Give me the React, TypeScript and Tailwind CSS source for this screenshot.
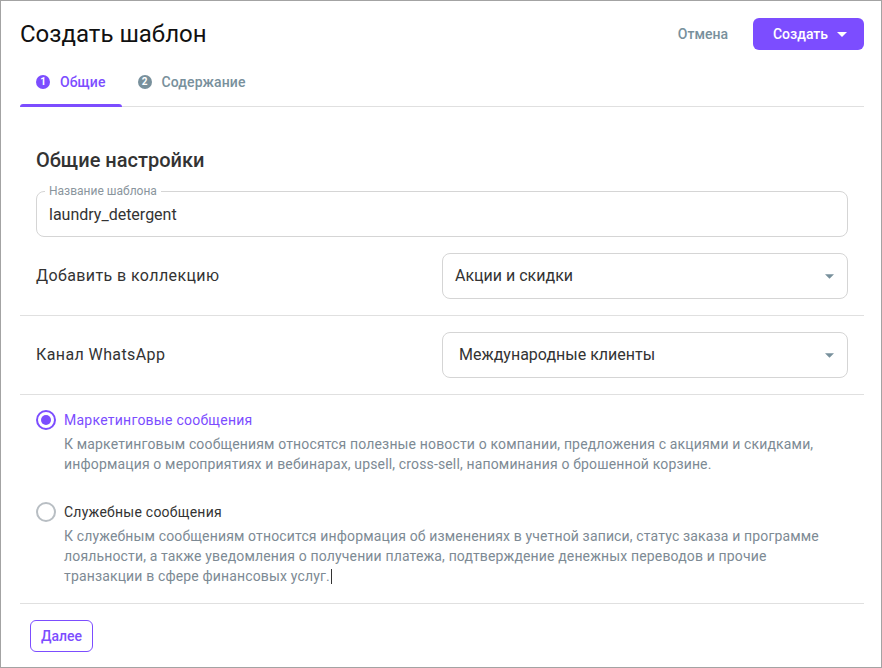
import { useState } from 'react'

const PURPLE = 'text-[#7c4dff]'

function Caret({ className }: { className?: string }) {
  return (
    <svg viewBox="0 0 10 5" className={className} aria-hidden>
      <path d="M0 0 L10 0 L5 5 Z" fill="currentColor" />
    </svg>
  )
}

function StepTab({ n, label, active }: { n: number; label: string; active?: boolean }) {
  return (
    <div className="relative flex h-[48px] items-center gap-[10px] px-4">
      <span
        className={`flex h-[14px] w-[14px] items-center justify-center rounded-full text-[10px] font-bold leading-none text-white ${
          active ? 'bg-[#7c4dff]' : 'bg-[#78909c]'
        }`}
      >
        {n}
      </span>
      <span className={`text-[14px] font-medium tracking-[0.1px] ${active ? PURPLE : 'text-[#78909c]'}`}>{label}</span>
      {active && <span className="absolute inset-x-0 -bottom-px h-[3px] rounded-t-full bg-[#7c4dff]" />}
    </div>
  )
}

function SelectBox({ value, inset = 'pl-[12px]' }: { value: string; inset?: string }) {
  return (
    <button
      type="button"
      className={`flex h-[46px] w-full items-center justify-between rounded-[8px] border border-[#d5d5d5] bg-white pr-[13px] text-left text-[16px] text-[#333] ${inset}`}
    >
      <span>{value}</span>
      <Caret className="h-[5px] w-[9px] text-[#78909c]" />
    </button>
  )
}

function Radio({
  checked,
  title,
  children,
  onSelect,
}: {
  checked: boolean
  title: string
  children: React.ReactNode
  onSelect: () => void
}) {
  return (
    <label className="flex cursor-pointer gap-[8px]" onClick={onSelect}>
      <span
        className={`flex h-[20px] w-[20px] shrink-0 items-center justify-center rounded-full border-2 ${
          checked ? 'border-[#7c4dff]' : 'border-[#b8bec3]'
        }`}
      >
        {checked && <span className="h-[10px] w-[10px] rounded-full bg-[#7c4dff]" />}
      </span>
      <span className="flex flex-col">
        <span className={`text-[14px] leading-[20px] tracking-[0.25px] ${checked ? PURPLE : 'text-[#333]'}`}>
          {title}
        </span>
        <span className="mt-[4px] text-[14px] leading-[20px] tracking-[0.15px] text-[#7d8a94]">{children}</span>
      </span>
    </label>
  )
}

export default function App() {
  const [kind, setKind] = useState<'marketing' | 'service'>('marketing')

  return (
    <div className="flex h-[668px] w-[882px] flex-col border border-[#a3a3a3] bg-white font-['Roboto',sans-serif] text-[#333]">
      {/* header */}
      <div className="flex items-center justify-between pl-[19px] pr-[17px] pt-[17px]">
        <h1 className="text-[24px] leading-[32px] text-[#111]">Создать шаблон</h1>
        <div className="flex items-center gap-[25px]">
          <button type="button" className="text-[14px] font-medium text-[#78909c]">
            Отмена
          </button>
          <button
            type="button"
            className="flex h-[32px] items-center gap-[9px] rounded-[6px] bg-[#7c4dff] pl-[20px] pr-[17px] text-[14px] font-medium text-white"
          >
            Создать
            <Caret className="h-[5px] w-[10px]" />
          </button>
        </div>
      </div>

      {/* steps */}
      <div className="ml-[19px] mr-[17px] mt-[8px] flex border-b border-[#e0e0e0]">
        <StepTab n={1} label="Общие" active />
        <StepTab n={2} label="Содержание" />
      </div>

      {/* general settings */}
      <div className="pl-[35px] pr-[33px] pt-[41px]">
        <h2 className="text-[20px] font-medium leading-[24px] text-[#333]">Общие настройки</h2>
        <fieldset className="mt-[13px] h-[52px] rounded-[8px] border border-[#d5d5d5] px-[12px]">
          <legend className="ml-[-4px] px-[4px] text-[12px] leading-[12px] text-[#8a959d]">Название шаблона</legend>
          <div className="pt-[6px] text-[16px] leading-[24px] text-[#333]">laundry_detergent</div>
        </fieldset>
        <div className="mt-[16px] grid grid-cols-2 items-center pb-[16px]">
          <span className="text-[16px] tracking-[0.4px]">Добавить в коллекцию</span>
          <SelectBox value="Акции и скидки" />
        </div>
      </div>

      <div className="ml-[19px] mr-[17px] border-t border-[#e0e0e0]" />

      <div className="grid grid-cols-2 items-center py-[16px] pl-[35px] pr-[33px]">
        <span className="text-[16px] tracking-[0.4px]">Канал WhatsApp</span>
        <SelectBox value="Международные клиенты" inset="pl-[16px]" />
      </div>

      <div className="ml-[19px] mr-[17px] border-t border-[#e0e0e0]" />

      {/* message type */}
      <div className="flex flex-col gap-[28px] pb-[17px] pl-[35px] pr-[33px] pt-[15px]">
        <Radio checked={kind === 'marketing'} title="Маркетинговые сообщения" onSelect={() => setKind('marketing')}>
          К маркетинговым сообщениям относятся полезные новости о компании, предложения с акциями и скидками,
          информация о мероприятиях и вебинарах, upsell, cross-sell, напоминания о брошенной корзине.
        </Radio>
        <Radio checked={kind === 'service'} title="Служебные сообщения" onSelect={() => setKind('service')}>
          К служебным сообщениям относится информация об изменениях в учетной записи, статус заказа и программе
          лояльности, а также уведомления о получении платежа, подтверждение денежных переводов и прочие транзакции
          в сфере финансовых услуг.
          <span className="ml-px inline-block h-[15px] w-px align-[-3px] bg-[#333]" />
        </Radio>
      </div>

      <div className="ml-[19px] mr-[17px] border-t border-[#e0e0e0]" />

      <div className="px-[29px] pt-[16px]">
        <button
          type="button"
          className="h-[32px] rounded-[6px] border border-[#7c4dff] px-[10px] text-[14px] font-medium text-[#7c4dff]"
        >
          Далее
        </button>
      </div>
    </div>
  )
}
